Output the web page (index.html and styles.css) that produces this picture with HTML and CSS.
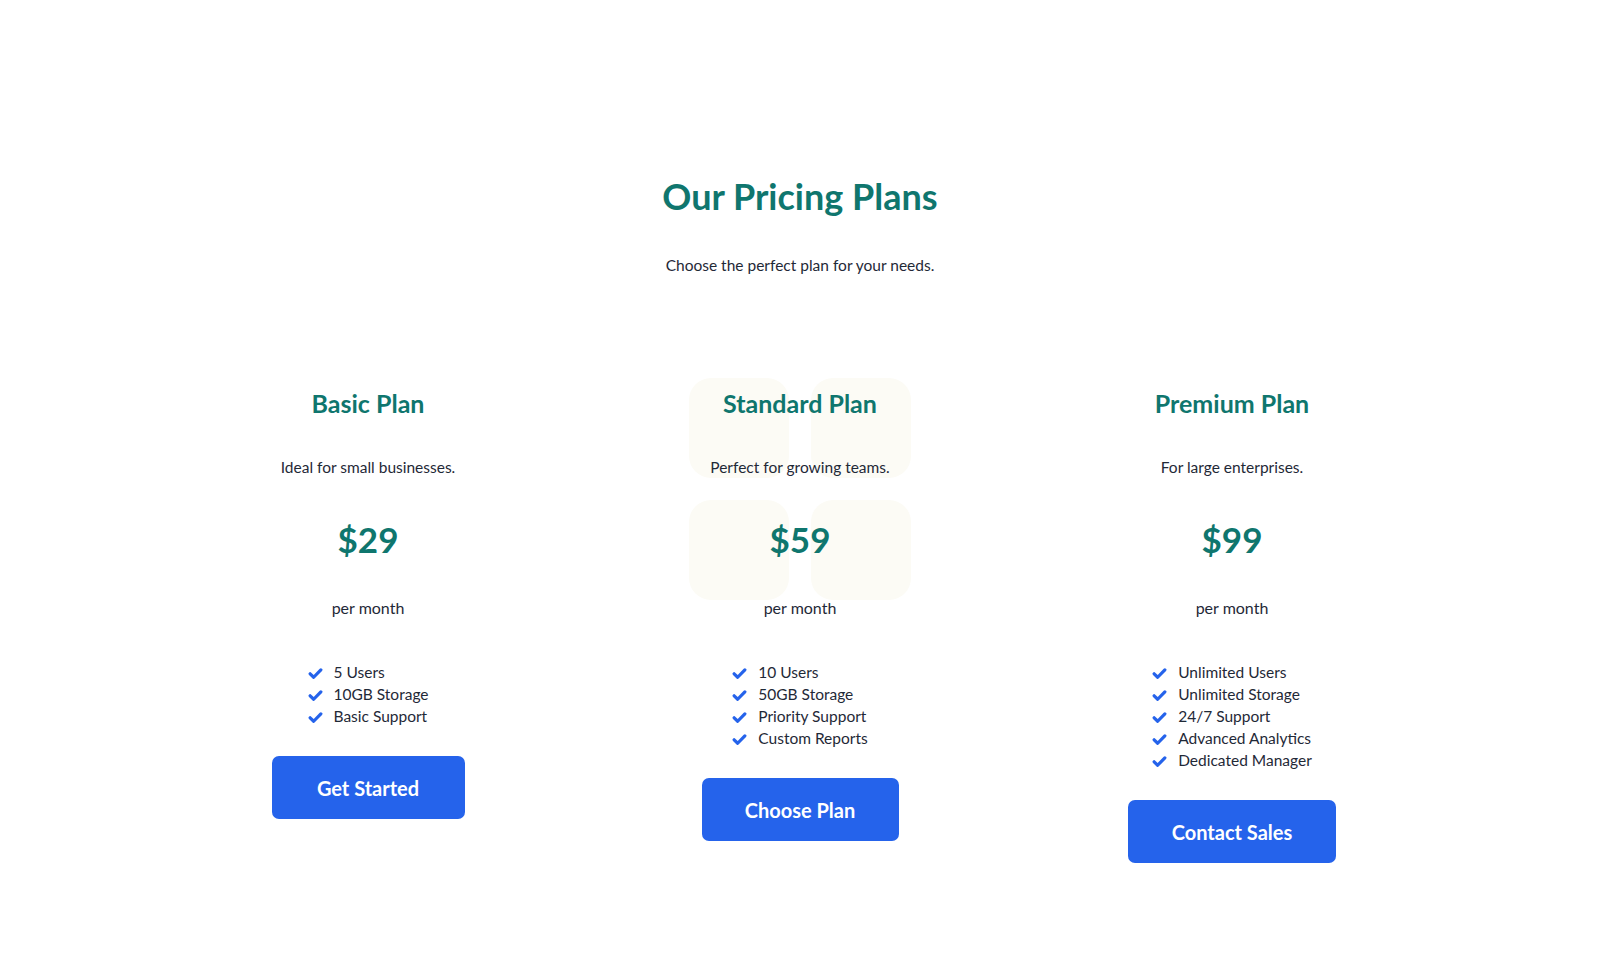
FILE: index.html
```html
<!DOCTYPE html>
<html lang="en">
<head>
<meta charset="utf-8">
<title>Our Pricing Plans</title>
<link rel="stylesheet" href="styles.css">
</head>
<body>
<section class="pricing">
  <h1 class="pricing-title">Our Pricing Plans</h1>
  <p class="pricing-sub">Choose the perfect plan for your needs.</p>
  <div class="plans">
    <div class="plan">
      <h2 class="plan-name">Basic Plan</h2>
      <p class="plan-desc">Ideal for small businesses.</p>
      <div class="plan-price">$29</div>
      <p class="plan-period">per month</p>
      <ul class="features">
        <li><svg class="check" viewBox="0 0 14 12"><polyline points="2,6.3 5.3,9.5 12,2.6"/></svg>5 Users</li>
        <li><svg class="check" viewBox="0 0 14 12"><polyline points="2,6.3 5.3,9.5 12,2.6"/></svg>10GB Storage</li>
        <li><svg class="check" viewBox="0 0 14 12"><polyline points="2,6.3 5.3,9.5 12,2.6"/></svg>Basic Support</li>
      </ul>
      <button class="btn btn-basic">Get Started</button>
    </div>
    <div class="plan plan-featured">
      <div class="deco">
        <span class="deco-sq"></span><span class="deco-sq"></span>
        <span class="deco-sq"></span><span class="deco-sq"></span>
      </div>
      <h2 class="plan-name">Standard Plan</h2>
      <p class="plan-desc">Perfect for growing teams.</p>
      <div class="plan-price">$59</div>
      <p class="plan-period">per month</p>
      <ul class="features">
        <li><svg class="check" viewBox="0 0 14 12"><polyline points="2,6.3 5.3,9.5 12,2.6"/></svg>10 Users</li>
        <li><svg class="check" viewBox="0 0 14 12"><polyline points="2,6.3 5.3,9.5 12,2.6"/></svg>50GB Storage</li>
        <li><svg class="check" viewBox="0 0 14 12"><polyline points="2,6.3 5.3,9.5 12,2.6"/></svg>Priority Support</li>
        <li><svg class="check" viewBox="0 0 14 12"><polyline points="2,6.3 5.3,9.5 12,2.6"/></svg>Custom Reports</li>
      </ul>
      <button class="btn btn-standard">Choose Plan</button>
    </div>
    <div class="plan">
      <h2 class="plan-name">Premium Plan</h2>
      <p class="plan-desc">For large enterprises.</p>
      <div class="plan-price">$99</div>
      <p class="plan-period">per month</p>
      <ul class="features">
        <li><svg class="check" viewBox="0 0 14 12"><polyline points="2,6.3 5.3,9.5 12,2.6"/></svg>Unlimited Users</li>
        <li><svg class="check" viewBox="0 0 14 12"><polyline points="2,6.3 5.3,9.5 12,2.6"/></svg>Unlimited Storage</li>
        <li><svg class="check" viewBox="0 0 14 12"><polyline points="2,6.3 5.3,9.5 12,2.6"/></svg>24/7 Support</li>
        <li><svg class="check" viewBox="0 0 14 12"><polyline points="2,6.3 5.3,9.5 12,2.6"/></svg>Advanced Analytics</li>
        <li><svg class="check" viewBox="0 0 14 12"><polyline points="2,6.3 5.3,9.5 12,2.6"/></svg>Dedicated Manager</li>
      </ul>
      <button class="btn btn-premium">Contact Sales</button>
    </div>
  </div>
</section>
</body>
</html>
```

FILE: styles.css
```css
* { box-sizing: border-box; }

html, body {
  margin: 0;
  padding: 0;
  background: #ffffff;
}

body {
  font-family: "Lato", "Inter", sans-serif;
  color: #1f2937;
}

.pricing {
  padding-top: 175px;
  text-align: center;
}

.pricing-title {
  margin: 0;
  font-size: 36px;
  line-height: 43px;
  font-weight: 700;
  color: #0f766e;
}

.pricing-sub {
  margin: 35px 0 0;
  font-size: 15.5px;
  line-height: 24px;
}

.plans {
  display: grid;
  grid-template-columns: repeat(3, 1fr);
  max-width: 1296px;
  margin: 110px auto 0;
  align-items: start;
}

.plan {
  position: relative;
  display: flex;
  flex-direction: column;
  align-items: center;
}

.plan > * { position: relative; }

.deco {
  position: absolute;
  top: -9px;
  left: 50%;
  width: 222px;
  margin-left: -111px;
  display: grid;
  grid-template-columns: 100px 100px;
  grid-auto-rows: 100px;
  gap: 22px;
}

.deco-sq {
  background: #fcfbf5;
  border-radius: 22px;
}

.plan-name {
  margin: 0;
  font-size: 25px;
  line-height: 32px;
  font-weight: 700;
  color: #0f766e;
}

.plan-desc {
  margin: 36px 0 0;
  font-size: 15.5px;
  line-height: 24px;
}

.plan-price {
  margin-top: 38px;
  font-size: 35px;
  line-height: 44px;
  font-weight: 700;
  color: #0f766e;
}

.plan-period {
  margin: 35px 0 0;
  font-size: 16px;
  line-height: 24px;
}

.features {
  list-style: none;
  margin: 41px 0 0;
  padding: 0;
  text-align: left;
}

.features li {
  display: flex;
  align-items: center;
  font-size: 15.5px;
  line-height: 22px;
}

.check {
  width: 15px;
  height: 13px;
  margin-right: 11px;
  margin-top: 2px;
  flex: none;
  fill: none;
  stroke: #2563eb;
  stroke-width: 3;
  stroke-linecap: round;
  stroke-linejoin: round;
}

.btn {
  margin-top: 29px;
  height: 63px;
  border: none;
  border-radius: 7px;
  background: #2563eb;
  color: #ffffff;
  font-family: inherit;
  font-size: 20px;
  font-weight: 700;
  cursor: pointer;
}

.btn-basic { width: 193px; }
.btn-standard { width: 197px; }
.btn-premium { width: 208px; }
```
